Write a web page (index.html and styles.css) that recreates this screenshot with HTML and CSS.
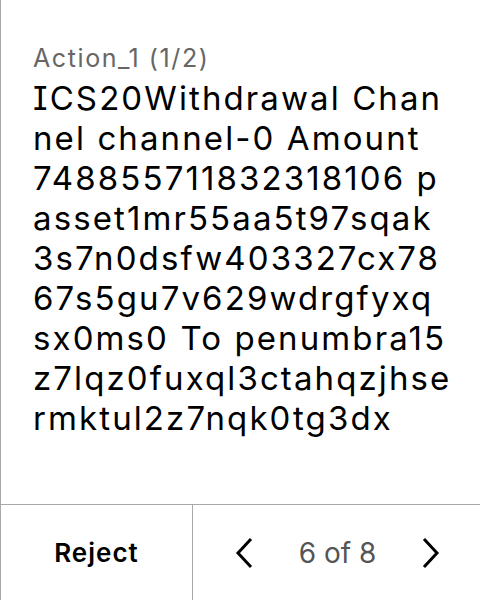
FILE: index.html
```html
<!DOCTYPE html>
<html>
<head>
<meta charset="utf-8">
<link rel="stylesheet" href="styles.css">
</head>
<body>
<div class="screen">
  <div class="content">
    <div class="title">Action_1 (1/2)</div>
    <div class="value">ICS20Withdrawal Channel channel-0 Amount 748855711832318106 passet1mr55aa5t97sqak3s7n0dsfw403327cx7867s5gu7v629wdrgfyxqsx0ms0 To penumbra15z7lqz0fuxql3ctahqzjhsermktul2z7nqk0tg3dx</div>
  </div>
  <div class="footer">
    <div class="reject">Reject</div>
    <div class="nav">
      <svg class="chev" width="20" height="32" viewBox="0 0 20 32"><path d="M16 2 L3 16 L16 30" fill="none" stroke="#000" stroke-width="3"/></svg>
      <span class="page">6 of 8</span>
      <svg class="chev" width="20" height="32" viewBox="0 0 20 32"><path d="M4 2 L17 16 L4 30" fill="none" stroke="#000" stroke-width="3"/></svg>
    </div>
  </div>
</div>
</body>
</html>
```
FILE: styles.css
```css
html, body {
  margin: 0;
  padding: 0;
  background: #fff;
}
.screen {
  width: 480px;
  height: 600px;
  box-sizing: border-box;
  border-left: 1px solid #a8a8a8;
  display: flex;
  flex-direction: column;
  font-family: Inter, "Noto Sans", sans-serif;
  font-feature-settings: "cv08";
}
.content {
  height: 505px;
  flex-shrink: 0;
  box-sizing: border-box;
  border-bottom: 1px solid #a8a8a8;
  padding: 42px 28px 0 32px;
}
.title {
  font-size: 25px;
  line-height: 32px;
  letter-spacing: 1.6px;
  color: #666;
}
.value {
  margin-top: 4px;
  font-size: 33px;
  line-height: 40px;
  letter-spacing: 2.1px;
  color: #000;
  word-break: break-all;
}
.footer {
  flex: 1;
  display: flex;
}
.reject {
  width: 191px;
  border-right: 1px solid #a8a8a8;
  display: flex;
  align-items: center;
  justify-content: center;
  font-size: 26px;
  font-weight: 600;
  letter-spacing: 1px;
  color: #000;
}
.nav {
  flex: 1;
  display: flex;
  align-items: center;
  justify-content: space-between;
  padding: 0 40px 0 42px;
}
.page {
  font-size: 28px;
  color: #555;
}
```
